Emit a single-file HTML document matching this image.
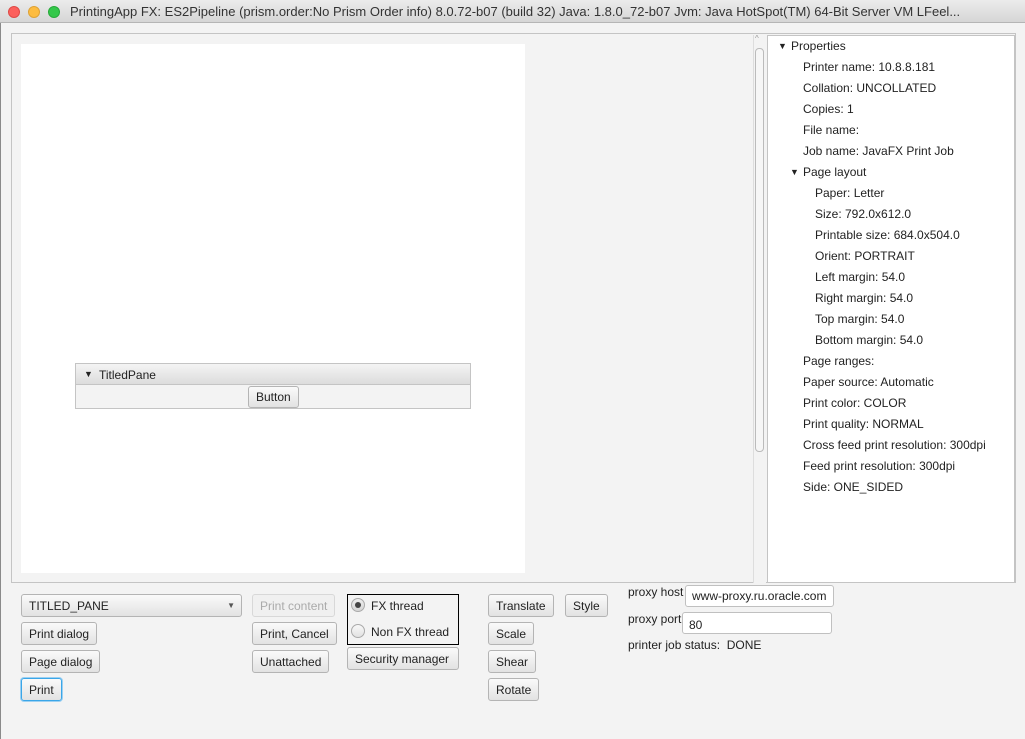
<!DOCTYPE html>
<html><head><style>
*{box-sizing:border-box;margin:0;padding:0}
body{width:1025px;height:739px;background:#f3f3f3;font-family:"Liberation Sans",sans-serif;font-size:12px;color:#222;position:relative;overflow:hidden}
.a{position:absolute}
.title{left:0;top:0;width:1025px;height:23px;background:linear-gradient(#ececec,#d6d6d6);border-bottom:1px solid #b5b5b5;font-size:13px;color:#333;line-height:24px;padding-left:70px;white-space:nowrap;overflow:hidden}
.dot{width:12px;height:12px;border-radius:50%;top:6px}
.btn{position:absolute;height:23px;border:1px solid #b4b4b4;border-radius:3px;background:linear-gradient(#fafafa,#e2e2e2);line-height:22px;padding:0 7px;white-space:nowrap;color:#222}
.row{position:absolute;white-space:nowrap;font-size:12px;color:#222}
.inp{position:absolute;background:#fff;border:1px solid #c0c0c0;border-radius:3px;height:22px;line-height:20px;padding-left:6px;font-size:12px}
</style></head><body>
<div class="a" style="left:0;top:23px;width:1px;height:716px;background:#8a8a8a"></div>
<div class="a title">PrintingApp FX: ES2Pipeline (prism.order:No Prism Order info) 8.0.72-b07 (build 32) Java: 1.8.0_72-b07 Jvm: Java HotSpot(TM) 64-Bit Server VM LFeel...</div>
<div class="a dot" style="left:8px;background:#fc605c;border:1px solid #de4a46"></div>
<div class="a dot" style="left:28px;background:#fdbc40;border:1px solid #dea236"></div>
<div class="a dot" style="left:48px;background:#34c84a;border:1px solid #27a93a"></div>

<div class="a" style="left:11px;top:33px;width:1005px;height:550px;border:1px solid #c4c4c4;background:#f3f3f3"></div>
<div class="a" style="left:21px;top:44px;width:504px;height:529px;background:#fff"></div>

<div class="a" style="left:75px;top:363px;width:396px;height:46px;border:1px solid #c4c4c4;background:#f3f3f3"></div>
<div class="a" style="left:76px;top:364px;width:394px;height:21px;background:linear-gradient(#f4f4f4,#dcdcdc);border-bottom:1px solid #c4c4c4"></div>
<div class="row" style="left:84px;top:369px;font-size:9px">▼</div>
<div class="row" style="left:99px;top:368px">TitledPane</div>
<div class="btn" style="left:248px;top:386px;height:22px;line-height:21px">Button</div>

<div class="a" style="left:753px;top:35px;width:13px;height:548px;background:#f3f3f3;border-left:1px solid #ddd"></div>
<div class="a" style="left:755px;top:48px;width:9px;height:404px;border:1px solid #bbb;border-radius:4px;background:#f6f6f6"></div>
<div class="row" style="left:755px;top:34px;font-size:8px;color:#999">^</div>
<div class="a" style="left:767px;top:35px;width:248px;height:548px;background:#fff;border:1px solid #c4c4c4"></div>

<div class="row" style="left:778px;top:41px;font-size:9px">▼</div>
<div class="row" style="left:791px;top:39px">Properties</div>
<div class="row" style="left:803px;top:60px">Printer name: 10.8.8.181</div>
<div class="row" style="left:803px;top:81px">Collation: UNCOLLATED</div>
<div class="row" style="left:803px;top:102px">Copies: 1</div>
<div class="row" style="left:803px;top:123px">File name:</div>
<div class="row" style="left:803px;top:144px">Job name: JavaFX Print Job</div>
<div class="row" style="left:790px;top:167px;font-size:9px">▼</div>
<div class="row" style="left:803px;top:165px">Page layout</div>
<div class="row" style="left:815px;top:186px">Paper: Letter</div>
<div class="row" style="left:815px;top:207px">Size: 792.0x612.0</div>
<div class="row" style="left:815px;top:228px">Printable size: 684.0x504.0</div>
<div class="row" style="left:815px;top:249px">Orient: PORTRAIT</div>
<div class="row" style="left:815px;top:270px">Left margin: 54.0</div>
<div class="row" style="left:815px;top:291px">Right margin: 54.0</div>
<div class="row" style="left:815px;top:312px">Top margin: 54.0</div>
<div class="row" style="left:815px;top:333px">Bottom margin: 54.0</div>
<div class="row" style="left:803px;top:354px">Page ranges:</div>
<div class="row" style="left:803px;top:375px">Paper source: Automatic</div>
<div class="row" style="left:803px;top:396px">Print color: COLOR</div>
<div class="row" style="left:803px;top:417px">Print quality: NORMAL</div>
<div class="row" style="left:803px;top:438px">Cross feed print resolution: 300dpi</div>
<div class="row" style="left:803px;top:459px">Feed print resolution: 300dpi</div>
<div class="row" style="left:803px;top:480px">Side: ONE_SIDED</div>

<div class="btn" style="left:21px;top:594px;width:221px">TITLED_PANE<span style="position:absolute;right:6px;top:0;font-size:8px;color:#555">▼</span></div>
<div class="btn" style="left:21px;top:622px">Print dialog</div>
<div class="btn" style="left:21px;top:650px">Page dialog</div>
<div class="btn" style="left:21px;top:678px;border:1px solid #3aa6e8;box-shadow:0 0 0 1px #9cd0f2">Print</div>

<div class="btn" style="left:252px;top:594px;color:#aaa;border-color:#d8d8d8;background:#f0f0f0">Print content</div>
<div class="btn" style="left:252px;top:622px">Print, Cancel</div>
<div class="btn" style="left:252px;top:650px">Unattached</div>

<div class="a" style="left:347px;top:594px;width:112px;height:51px;border:1px solid #000"></div>
<div class="a" style="left:351px;top:598px;width:14px;height:14px;border-radius:50%;border:1px solid #aaa;background:linear-gradient(#eee,#d5d5d5)"></div>
<div class="a" style="left:355px;top:602px;width:6px;height:6px;border-radius:50%;background:#444"></div>
<div class="row" style="left:371px;top:599px">FX thread</div>
<div class="a" style="left:351px;top:624px;width:14px;height:14px;border-radius:50%;border:1px solid #aaa;background:linear-gradient(#f8f8f8,#e2e2e2)"></div>
<div class="row" style="left:371px;top:625px">Non FX thread</div>
<div class="btn" style="left:347px;top:647px;width:112px">Security manager</div>

<div class="btn" style="left:488px;top:594px">Translate</div>
<div class="btn" style="left:565px;top:594px">Style</div>
<div class="btn" style="left:488px;top:622px">Scale</div>
<div class="btn" style="left:488px;top:650px">Shear</div>
<div class="btn" style="left:488px;top:678px">Rotate</div>

<div class="row" style="left:628px;top:585px">proxy host</div>
<div class="inp" style="left:685px;top:585px;width:149px">www-proxy.ru.oracle.com</div>
<div class="row" style="left:628px;top:612px">proxy port</div>
<div class="inp" style="left:682px;top:612px;width:150px;padding-top:2px">80</div>
<div class="row" style="left:628px;top:638px">printer job status:&nbsp; DONE</div>
</body></html>
